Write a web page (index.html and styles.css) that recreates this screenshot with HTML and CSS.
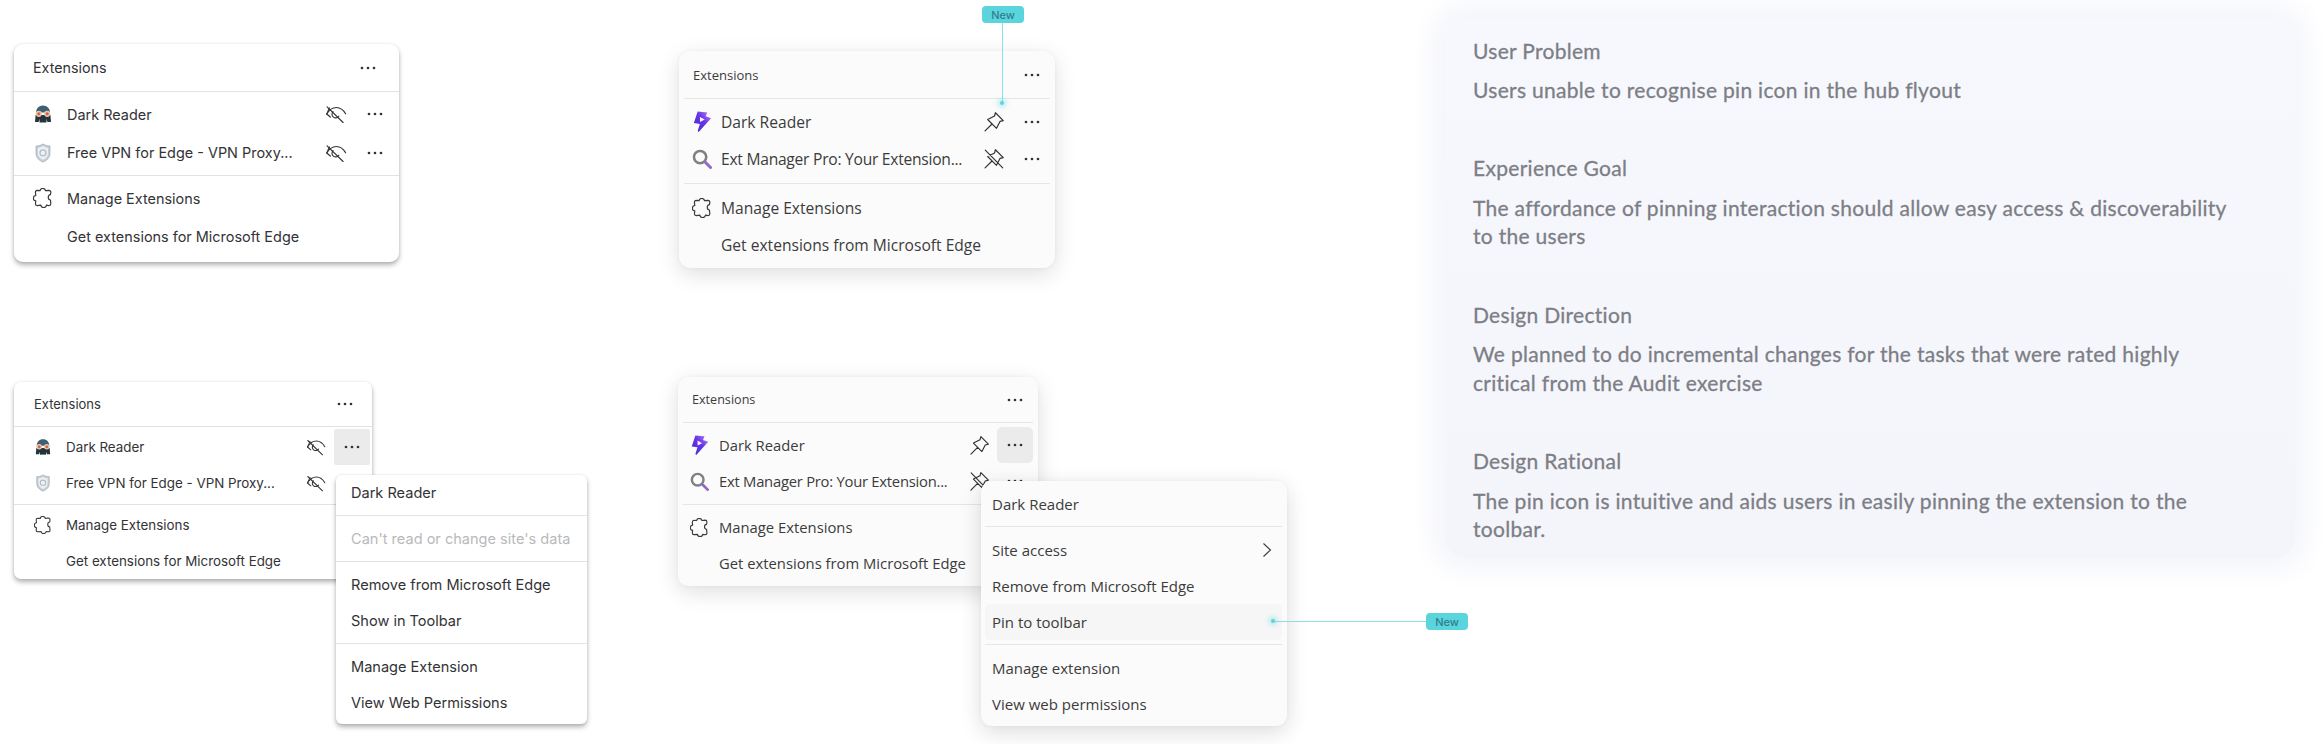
FILE: index.html
```html
<!DOCTYPE html>
<html lang="en">
<head>
<meta charset="utf-8">
<title>Extensions hub flyout – pin affordance</title>
<link rel="stylesheet" href="styles.css">
</head>
<body>
<svg class="sprite" aria-hidden="true">
  <defs>
    <linearGradient id="bolt" x1="0" y1="1" x2="1" y2="0">
      <stop offset="0" stop-color="#3b2fd6"/><stop offset=".55" stop-color="#6a32e8"/><stop offset="1" stop-color="#b68cf2"/>
    </linearGradient>
    <symbol id="dots" viewBox="0 0 18 6"><circle cx="3" cy="3" r="1.35"/><circle cx="9" cy="3" r="1.35"/><circle cx="15" cy="3" r="1.35"/></symbol>
    <symbol id="eye" viewBox="0 0 22 22"><g fill="none" stroke="currentColor" stroke-width="1.05" stroke-linecap="round"><path d="M2.5 11C5 6.8 8 5 11.3 5s6.300 1.800 8.500 5.800"/><path d="M8.300 8.800a3.400 3.400 0 1 0 5.300 4.200M13.700 9.300"/><path d="M2.800 4.500 17.500 18.800"/><path d="M5 5.600 2.500 11l3.300 2.800"/></g></symbol>
    <symbol id="pin" viewBox="0 0 22 22"><path fill="none" stroke="currentColor" stroke-width="1.1" stroke-linejoin="round" stroke-linecap="round" d="M12.300 2.500 19.500 9.700 16.500 10.500 13.300 16.800 5.200 8.700 11.500 5.500ZM9.200 12.800 2.800 19.200"/></symbol>
    <symbol id="unpin" viewBox="0 0 22 22"><path fill="none" stroke="currentColor" stroke-width="1.1" stroke-linejoin="round" stroke-linecap="round" d="M12.300 2.500 19.500 9.700 16.500 10.500 13.300 16.800 5.200 8.700 11.500 5.500ZM9.200 12.800 2.800 19.200M3 2.800 19 19.200"/></symbol>
    <symbol id="puzzle" viewBox="1.500 1.500 16.500 16.500"><path fill="none" stroke="currentColor" stroke-width="1" stroke-linejoin="round" d="M7.300 3.700C7.500 1.300 11.500 1.300 11.800 3.700L14.700 3.400C15.700 3.400 16.200 4 16.200 5L15.900 7C13.500 7.100 13.500 11.300 15.900 11.400L16.200 14.500C16.200 15.500 15.700 16 14.700 16L12.600 15.700C12.300 18.300 8.200 18.300 8 15.700L5 16C4 16 3.500 15.500 3.500 14.500L3.800 12.200C1.100 11.900 1.100 8 3.800 7.700L3.500 5.200C3.500 4.200 4 3.500 5 3.500Z"/></symbol>
    <symbol id="skull" viewBox="0 0 20 20"><path fill="#3d6172" d="M10 1.500C5.800 1.500 3.200 4.500 3 8.500H17C16.800 4.500 14.200 1.500 10 1.500Z"/><path fill="#24343d" d="M2.600 11H17.400L18 18H14.500L13 14.500H7L5.500 18H2Z"/><path fill="#24343d" d="M6.500 14H13.500V18.500H6.500Z"/><circle cx="5.800" cy="9.800" r="3.100" fill="#e9c4ae"/><circle cx="14.200" cy="9.800" r="3.100" fill="#e9c4ae"/><circle cx="5.800" cy="9.800" r="1.500" fill="#d2643f"/><circle cx="14.200" cy="9.800" r="1.500" fill="#d2643f"/></symbol>
    <symbol id="shield" viewBox="0 0 20 20"><path fill="#c9d0d9" stroke="#9ea8b3" stroke-width=".8" d="M10 1C7.800 2.400 5.500 3 3.100 3V10.500C3.100 14.600 6.100 17.500 10 19C13.900 17.500 16.900 14.600 16.900 10.500V3C14.500 3 12.200 2.400 10 1Z"/><path fill="#eef1f4" d="M10 3.300C8.300 4.200 6.900 4.700 5 4.900V10.300C5 13.400 7.200 15.500 10 16.700C12.800 15.500 15 13.400 15 10.300V4.900C13.100 4.700 11.700 4.200 10 3.300Z"/><circle cx="10" cy="9.800" r="3" fill="none" stroke="#b4bdc7" stroke-width="1.300"/></symbol>
    <symbol id="bolt-icon" viewBox="0 0 20 24"><path fill="url(#bolt)" d="M5.500 1.500 15.500 2.500 13.800 6.500 19.500 8.500 6.500 23 5.500 21.800 7.800 14.500 1.500 13.500Z"/><path fill="#fbfbfb" d="M7.800 7.200 12.800 10 8 12.600Z"/></symbol>
    <symbol id="lens" viewBox="0.500 0.500 20.500 20.500"><circle cx="8.800" cy="8.800" r="6.300" fill="none" stroke="#7f8083" stroke-width="2.600"/><path stroke="#9369c7" stroke-width="3" stroke-linecap="round" d="M14.500 14.500 19.500 19.500"/></symbol>
    <symbol id="chevron" viewBox="0 0 12 16"><path fill="none" stroke="currentColor" stroke-width="1.100" d="M2.500 1.500 9.500 8 2.500 14.500"/></symbol>
  </defs>
</svg>

<main class="canvas">

  <section class="card card-a">
    <header class="card-head"><span>Extensions</span><svg class="dots"><use href="#dots"/></svg></header>
    <div class="group group-top">
      <div class="row"><span class="slot"><svg class="ico"><use href="#skull"/></svg></span><span class="label">Dark Reader</span><span class="act"><svg class="state"><use href="#eye"/></svg></span><span class="act"><svg class="dots"><use href="#dots"/></svg></span></div>
      <div class="row"><span class="slot"><svg class="ico"><use href="#shield"/></svg></span><span class="label">Free VPN for Edge - VPN Proxy...</span><span class="act"><svg class="state"><use href="#eye"/></svg></span><span class="act"><svg class="dots"><use href="#dots"/></svg></span></div>
    </div>
    <div class="group group-end">
      <div class="row"><span class="slot"><svg class="ico"><use href="#puzzle"/></svg></span><span class="label">Manage Extensions</span></div>
      <div class="row"><span class="slot"></span><span class="label">Get extensions for Microsoft Edge</span></div>
    </div>
  </section>

  <section class="card card-b">
    <header class="card-head"><span>Extensions</span><svg class="dots"><use href="#dots"/></svg></header>
    <div class="group group-top">
      <div class="row"><span class="slot"><svg class="ico ico-bolt"><use href="#bolt-icon"/></svg></span><span class="label">Dark Reader</span><span class="act"><svg class="state"><use href="#pin"/></svg></span><span class="act"><svg class="dots"><use href="#dots"/></svg></span></div>
      <div class="row"><span class="slot"><svg class="ico"><use href="#lens"/></svg></span><span class="label label-tight">Ext Manager Pro: Your Extension...</span><span class="act"><svg class="state"><use href="#unpin"/></svg></span><span class="act"><svg class="dots"><use href="#dots"/></svg></span></div>
    </div>
    <div class="group group-end">
      <div class="row"><span class="slot"><svg class="ico"><use href="#puzzle"/></svg></span><span class="label">Manage Extensions</span></div>
      <div class="row"><span class="slot"></span><span class="label">Get extensions from Microsoft Edge</span></div>
    </div>
  </section>

  <section class="card card-c">
    <header class="card-head"><span>Extensions</span><svg class="dots"><use href="#dots"/></svg></header>
    <div class="group group-top">
      <div class="row"><span class="slot"><svg class="ico"><use href="#skull"/></svg></span><span class="label">Dark Reader</span><span class="act"><svg class="state"><use href="#eye"/></svg></span><span class="act act-on"><svg class="dots"><use href="#dots"/></svg></span></div>
      <div class="row"><span class="slot"><svg class="ico"><use href="#shield"/></svg></span><span class="label">Free VPN for Edge - VPN Proxy...</span><span class="act"><svg class="state"><use href="#eye"/></svg></span><span class="act"><svg class="dots"><use href="#dots"/></svg></span></div>
    </div>
    <div class="group group-end">
      <div class="row"><span class="slot"><svg class="ico"><use href="#puzzle"/></svg></span><span class="label">Manage Extensions</span></div>
      <div class="row"><span class="slot"></span><span class="label">Get extensions for Microsoft Edge</span></div>
    </div>
  </section>

  <section class="menu menu-c">
    <div class="menu-group"><div class="menu-row">Dark Reader</div></div>
    <div class="menu-group"><div class="menu-row menu-row-off">Can't read or change site's data</div></div>
    <div class="menu-group"><div class="menu-row">Remove from Microsoft Edge</div><div class="menu-row">Show in Toolbar</div></div>
    <div class="menu-group"><div class="menu-row">Manage Extension</div><div class="menu-row">View Web Permissions</div></div>
  </section>

  <section class="card card-d">
    <header class="card-head"><span>Extensions</span><svg class="dots"><use href="#dots"/></svg></header>
    <div class="group group-top">
      <div class="row"><span class="slot"><svg class="ico ico-bolt"><use href="#bolt-icon"/></svg></span><span class="label">Dark Reader</span><span class="act"><svg class="state"><use href="#pin"/></svg></span><span class="act act-on"><svg class="dots"><use href="#dots"/></svg></span></div>
      <div class="row"><span class="slot"><svg class="ico"><use href="#lens"/></svg></span><span class="label label-tight">Ext Manager Pro: Your Extension...</span><span class="act"><svg class="state"><use href="#unpin"/></svg></span><span class="act"><svg class="dots"><use href="#dots"/></svg></span></div>
    </div>
    <div class="group group-end">
      <div class="row"><span class="slot"><svg class="ico"><use href="#puzzle"/></svg></span><span class="label">Manage Extensions</span></div>
      <div class="row"><span class="slot"></span><span class="label">Get extensions from Microsoft Edge</span></div>
    </div>
  </section>

  <section class="menu menu-d">
    <div class="menu-group"><div class="menu-row">Dark Reader</div></div>
    <div class="menu-group">
      <div class="menu-row menu-row-more">Site access<svg class="chevron"><use href="#chevron"/></svg></div>
      <div class="menu-row">Remove from Microsoft Edge</div>
      <div class="menu-row menu-row-on">Pin to toolbar</div>
    </div>
    <div class="menu-group"><div class="menu-row">Manage extension</div><div class="menu-row">View web permissions</div></div>
  </section>

  <span class="badge badge-top">New</span>
  <span class="lead lead-v"></span>
  <span class="lead-dot lead-dot-top"></span>

  <span class="badge badge-side">New</span>
  <span class="lead lead-h"></span>
  <span class="lead-dot lead-dot-side"></span>

  <aside class="notes">
    <article class="note"><h2>User Problem</h2><p>Users unable to recognise pin icon in the hub flyout</p></article>
    <article class="note"><h2>Experience Goal</h2><p>The affordance of pinning interaction should allow easy access &amp; discoverability to the users</p></article>
    <article class="note"><h2>Design Direction</h2><p>We planned to do incremental changes for the tasks that were rated highly critical from the Audit exercise</p></article>
    <article class="note"><h2>Design Rational</h2><p>The pin icon is intuitive and aids users in easily pinning the extension to the toolbar.</p></article>
  </aside>

</main>
</body>
</html>
```

FILE: styles.css
```css
* { box-sizing: border-box; }

html, body {
  margin: 0;
  padding: 0;
  background: #fff;
}

.sprite { position: absolute; width: 0; height: 0; }

.canvas {
  position: relative;
  width: 2322px;
  height: 744px;
  overflow: hidden;
}

/* Flyout cards: placed freely on the design board */
.card {
  position: absolute;
  background: var(--bg);
  color: var(--ink);
  font-family: var(--face);
  font-size: var(--fs);
  border-radius: var(--radius);
  box-shadow: var(--shadow);
}

.card-a, .card-c {
  --bg: #fff;
  --ink: #333336;
  --face: Inter, "Liberation Sans", sans-serif;
  --rule: #e2e2e4;
  --shadow: 0 3px 5px rgba(0, 0, 0, .3), 0 0 3px rgba(0, 0, 0, .08);
}

.card-b, .card-d {
  --bg: #fbfbfb;
  --ink: #3b3b3b;
  --face: "Open Sans", "Noto Sans", sans-serif;
  --rule: #e6e6e6;
  --shadow: 0 6px 22px rgba(0, 0, 0, .13), 0 0 5px rgba(0, 0, 0, .04);
}

.card-a {
  left: 14px; top: 44px; width: 385px;
  --radius: 9px; --fs: 14.450px; --head-fs: 14.300px; --head-h: 48px; --row-h: 38.500px; --inset: 0px;
  --head-pl: 19px; --head-pr: 22px; --pl: 19px; --pr: 6px; --slot: 34px; --gap: 3px;
  --top-pt: 3px; --top-pb: 3px; --end-pt: 3px; --end-pb: 6px; --ico: 20px; --state: 24px;
}

.card-b {
  left: 679px; top: 51px; width: 376px;
  --radius: 12px; --fs: 15.600px; --head-fs: 13px; --head-h: 48px; --row-h: 37.500px; --inset: 5px;
  --head-pl: 9px; --head-pr: 9px; --pl: 8px; --pr: 0px; --slot: 29px; --gap: 2px;
  --top-pt: 4px; --top-pb: 5px; --end-pt: 5px; --end-pb: 4px; --ico: 20px; --state: 24px;
}

.card-c {
  left: 14px; top: 382px; width: 358px;
  --radius: 7px; --fs: 13.370px; --head-fs: 13px; --head-h: 45px; --row-h: 36px; --inset: 0px;
  --head-pl: 20px; --head-pr: 18px; --pl: 20px; --pr: 2px; --slot: 32px; --gap: 0px;
  --top-pt: 2px; --top-pb: 3px; --end-pt: 2px; --end-pb: 0px; --ico: 18px; --state: 22px;
}

.card-d {
  left: 678px; top: 377px; width: 360px;
  --radius: 10px; --fs: 14.800px; --head-fs: 12.600px; --head-h: 46px; --row-h: 36px; --inset: 5px;
  --head-pl: 9px; --head-pr: 9px; --pl: 7px; --pr: 0px; --slot: 29px; --gap: 0px;
  --top-pt: 4px; --top-pb: 5px; --end-pt: 4px; --end-pb: 5px; --ico: 19px; --state: 23px;
}

.card-head {
  display: flex;
  align-items: center;
  justify-content: space-between;
  height: var(--head-h);
  margin: 0 var(--inset);
  padding: 0 var(--head-pr) 0 var(--head-pl);
  font-size: var(--head-fs);
  border-bottom: 1.500px solid var(--rule);
}

.card-b .card-head, .card-d .card-head { font-weight: 500; }

.group {
  margin: 0 var(--inset);
  padding-left: var(--pl);
  padding-right: var(--pr);
}

.group-top {
  padding-top: var(--top-pt);
  padding-bottom: var(--top-pb);
  border-bottom: 1.500px solid var(--rule);
}

.group-end {
  padding-top: var(--end-pt);
  padding-bottom: var(--end-pb);
}

.row {
  display: flex;
  align-items: center;
  height: var(--row-h);
}

.slot {
  flex: 0 0 var(--slot);
  display: flex;
  align-items: center;
  color: #3a3a3c;
}

.label {
  flex: 1;
  white-space: nowrap;
}

.label-tight { letter-spacing: -.25px; }

.act {
  flex: 0 0 36px;
  height: 36px;
  margin-left: var(--gap);
  display: flex;
  align-items: center;
  justify-content: center;
  color: #333;
}

.act-on { background: #ebebeb; border-radius: 2px; }
.card-d .act-on { border-radius: 5px; }

.dots { width: 18px; height: 6px; fill: #333; display: block; }
.state { width: var(--state); height: var(--state); display: block; }
.ico { width: var(--ico); height: var(--ico); display: block; }
.ico-bolt { height: calc(var(--ico) + 3px); }

/* Context menus */
.menu {
  position: absolute;
  z-index: 2;
  display: flex;
  flex-direction: column;
}

.menu-c {
  left: 336px; top: 475px; width: 251px;
  background: #fff;
  color: #333336;
  font: 14.550px Inter, "Liberation Sans", sans-serif;
  border-radius: 6px;
  box-shadow: 0 3px 5px rgba(0, 0, 0, .3), 0 0 3px rgba(0, 0, 0, .08);
}

.menu-c .menu-group { padding: 5px 0 4px; border-bottom: 1.500px solid #e2e2e4; }
.menu-c .menu-group:first-child { padding-top: 0; }
.menu-c .menu-group:last-child { border-bottom: 0; padding-bottom: 3px; }
.menu-c .menu-row { padding-left: 15px; }

.menu-d {
  left: 981px; top: 480.500px; width: 306px;
  padding: 0 5px 0 4px;
  background: #fbfbfb;
  color: #3b3b3b;
  font: 15px "Open Sans", "Noto Sans", sans-serif;
  border-radius: 11px;
  box-shadow: 0 6px 22px rgba(0, 0, 0, .14), 0 0 5px rgba(0, 0, 0, .04);
}

.menu-d .menu-group { padding: 5px 0 4px; border-bottom: 1.500px solid #e6e6e6; }
.menu-d .menu-group:last-child { border-bottom: 0; }
.menu-d .menu-row { padding: 0 9px 0 7px; border-radius: 5px; }

.menu-row {
  display: flex;
  align-items: center;
  height: 36px;
  white-space: nowrap;
}

.menu-row-off { color: #b9b9bb; }
.menu-row-on { background: #f6f6f6; }
.menu-row-more { justify-content: space-between; }
.chevron { width: 12px; height: 16px; color: #3b3b3b; }

/* "New" callouts */
.badge {
  position: absolute;
  z-index: 3;
  display: flex;
  align-items: center;
  justify-content: center;
  width: 42px;
  height: 17px;
  background: #5bd5dd;
  color: #2f7f8a;
  font: 500 11px Inter, "Liberation Sans", sans-serif;
  border-radius: 4px;
}

.badge-top { left: 982px; top: 6px; }
.badge-side { left: 1426px; top: 613px; }

.lead { position: absolute; z-index: 3; background: #86e2e7; }
.lead-v { left: 1002px; top: 23px; width: 1px; height: 80px; }
.lead-h { left: 1273px; top: 621px; width: 153px; height: 1px; }

.lead-dot {
  position: absolute;
  z-index: 3;
  width: 4px;
  height: 4px;
  background: #5bd5dd;
  border-radius: 50%;
  box-shadow: 0 0 5px 2px rgba(91, 213, 221, .45);
}

.lead-dot-top { left: 1000px; top: 101px; }
.lead-dot-side { left: 1271px; top: 619px; }

/* Notes panel */
.notes {
  position: absolute;
  left: 1445px;
  top: 18px;
  width: 850px;
  height: 540px;
  padding: 18.500px 0 0 28px;
  display: flex;
  flex-direction: column;
  gap: 50px;
  background: linear-gradient(#f6f8fd, #f4f5fa);
  box-shadow: 0 0 26px 14px #f5f6fb;
  border-radius: 20px;
  color: #7d7e86;
  font-family: Lato, "Open Sans", sans-serif;
  font-size: 21px;
  letter-spacing: .3px;
  -webkit-text-stroke: .3px currentColor;
}

.note h2 {
  margin: 0 0 11.500px;
  font-size: inherit;
  line-height: 28px;
  font-weight: 400;
}

.note p {
  margin: 0;
  width: 770px;
  line-height: 28.400px;
}
```
